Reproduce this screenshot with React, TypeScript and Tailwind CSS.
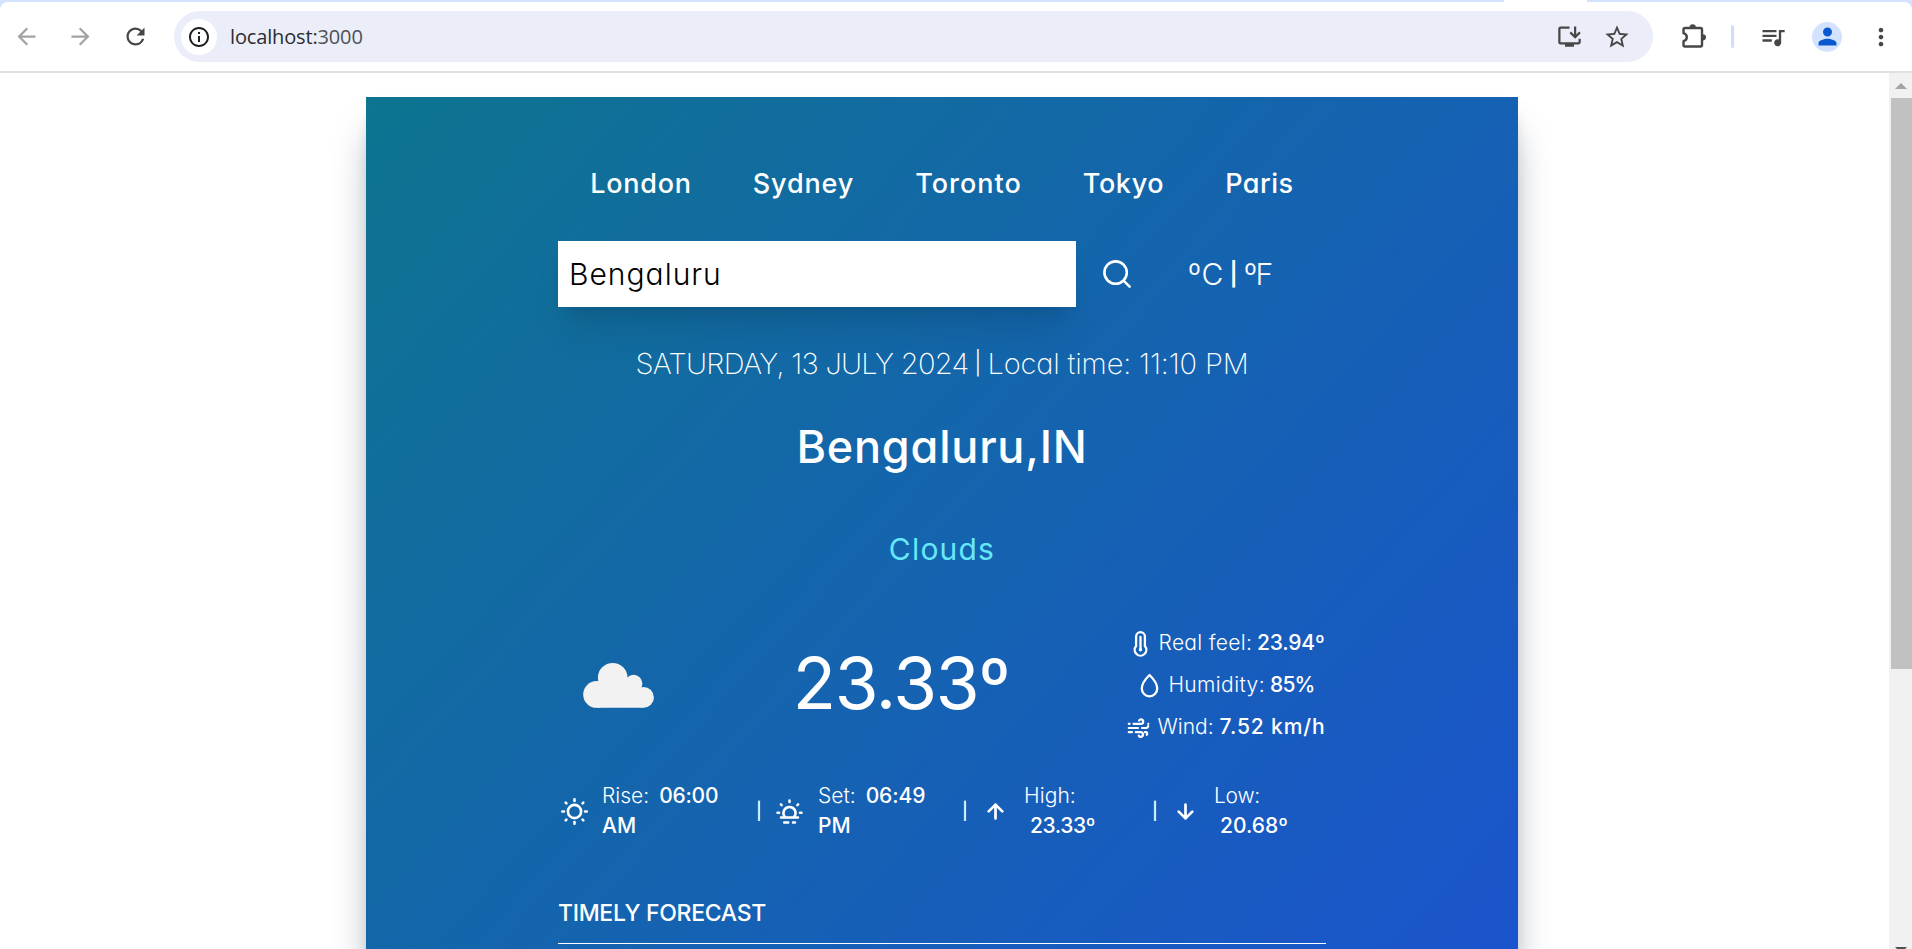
import type { ReactNode } from "react";
import {
  MdArrowBack,
  MdArrowForward,
  MdInfoOutline,
  MdInstallDesktop,
  MdMoreVert,
  MdPerson,
  MdQueueMusic,
  MdRefresh,
  MdStarBorder,
} from "react-icons/md";

const stroke = {
  fill: "none",
  stroke: "currentColor",
  strokeLinecap: "round",
  strokeLinejoin: "round",
} as const;

const ExtensionIcon = () => (
  <svg viewBox="0 0 26 26" className="size-[26px]" {...stroke} strokeWidth={2.4}>
    <path d="M4 4H19.5Q21 4 21 5.5V21Q21 22.5 19.5 22.5H4Q2.5 22.5 2.5 21V17.2Q5.8 16.2 5.8 13.2T2.5 9.2V5.5Q2.5 4 4 4Z" />
    <path d="M8.6 3.4a3.1 3.2 0 0 1 6.2 0ZM21.8 10.2a3.2 3.1 0 0 1 0 6.2Z" fill="currentColor" stroke="none" />
  </svg>
);

const SearchIcon = () => (
  <svg viewBox="0 0 28 28" className="size-7" {...stroke} strokeWidth={2.6}>
    <circle cx="12.6" cy="12.6" r="11.2" />
    <path d="M20.8 20.8 26.6 26.6" />
  </svg>
);

const ThermometerIcon = () => (
  <svg viewBox="0 0 27 27" className="size-[27px]" {...stroke} strokeWidth={2.3}>
    <path d="M9.1 6.6a4.4 4.4 0 0 1 8.8 0V16a5.8 5.8 0 1 1-8.8 0Z" />
    <path d="M13.5 7V19" />
    <circle cx="13.5" cy="19.8" r="1.7" fill="currentColor" stroke="none" />
  </svg>
);

const DropIcon = () => (
  <svg viewBox="0 0 27 27" className="size-[27px]" {...stroke} strokeWidth={2.3}>
    <path d="M13.5 3C10.2 6.2 5.8 10.8 5.8 16.6a7.7 7.7 0 0 0 15.4 0C21.2 10.8 16.8 6.2 13.5 3Z" />
  </svg>
);

const WindIcon = () => (
  <svg viewBox="0 0 27 27" className="size-[27px]" {...stroke} strokeWidth={2.2}>
    <path d="M3.8 9.8H4.6M8.5 9.8H16a2.2 2.2 0 1 0-1.9-3.3M23.2 9.8H23.3" />
    <path d="M3.8 14H13M17 14H21.4a2 2 0 0 0 1.8-1.8" />
    <path d="M3.8 18.2H7M10.8 18.2H15.6a2.3 2.3 0 1 1-1.9 3.4M20 18.2H21.4a1.8 1.8 0 0 1 .4 2.6" />
  </svg>
);

const SunIcon = () => (
  <svg viewBox="0 0 27 27" className="size-[27px]" {...stroke} strokeWidth={2.6}>
    <circle cx="13.5" cy="13.5" r="6.6" />
    <path d="M13.5 1.3V2.9M13.5 24.1V25.7M1.3 13.5H2.9M24.1 13.5H25.7M4.7 4.7 5.4 5.4M21.6 21.6 22.3 22.3M4.7 22.3 5.4 21.6M21.6 5.4 22.3 4.7" />
  </svg>
);

const SunsetIcon = () => (
  <svg viewBox="0 0 27 27" className="size-[27px]" {...stroke} strokeWidth={2.5}>
    <path d="M8.8 18.8C7.2 16.6 7 14.6 8 12.4a6.1 6.1 0 0 1 11 0C20 14.6 19.8 16.6 18.2 18.8" />
    <path d="M5 19.4H22M13.5 2.4V4M1.5 14.8H3M24 14.8H25.5M4.9 6.4 5.6 7.1M21.4 7.1 22.1 6.4M8.2 24.5H12.2M17 24.5H19" />
  </svg>
);

const ArrowIcon = ({ down = false }: { down?: boolean }) => (
  <svg viewBox="0 0 17 17" className={down ? "size-[17px] rotate-180" : "size-[17px]"} {...stroke} strokeWidth={2.7}>
    <path d="M8.5 15.4V1.6M1.7 8.4 8.5 1.6 15.3 8.4" />
  </svg>
);

const CloudIcon = () => (
  <svg viewBox="0 0 71 45" className="h-[45px] w-[71px]" fill="#f2f2f2">
    <circle cx="29.7" cy="14.8" r="14.8" />
    <circle cx="13.6" cy="31.4" r="13.4" />
    <circle cx="50.6" cy="20.6" r="8.8" />
    <circle cx="60.5" cy="34.4" r="10.4" />
    <path d="M13.6 20H52L60.5 34.4V44.8H13.6Z" />
  </svg>
);

const cities = [
  { name: "London", className: "tracking-[0.7px]" },
  { name: "Sydney", className: "tracking-[0.9px]" },
  { name: "Toronto", className: "tracking-[1px]" },
  { name: "Tokyo", className: "tracking-[0.6px]" },
  { name: "Paris", className: "tracking-[0.5px]" },
];

function Detail({ icon, label, value, labelClass, valueClass }: {
  icon: ReactNode;
  label: string;
  value: string;
  labelClass: string;
  valueClass: string;
}) {
  return (
    <div className="flex h-[30px] items-center justify-center whitespace-nowrap">
      {icon}
      <span className={`ml-[5px] font-light ${labelClass}`}>{label}</span>
      <span className={`font-medium ${valueClass}`}>{value}</span>
    </div>
  );
}

const Divider = () => <span className="flex w-0.5 justify-center text-[17px] font-medium">|</span>;

function Toolbar() {
  return (
    <header className="shrink-0 border-b-2 border-[#e0e1e3] bg-[#d3e3fd]">
      <div className="flex h-0.5">
        <span className="ml-[1504px] w-[83px] bg-white" />
      </div>
      <div className="flex h-[69px] items-center rounded-t-lg bg-white text-[#474747]">
        <MdArrowBack className="ml-[13px] size-[27px] text-[#a3a3a3]" />
        <MdArrowForward className="ml-[27px] size-[27px] text-[#a3a3a3]" />
        <MdRefresh className="ml-[28px] size-[27px]" />
        <div className="ml-[25px] flex h-[51px] w-[1479px] items-center rounded-full bg-[#ebeef8]">
          <span className="ml-[7px] flex size-9 items-center justify-center rounded-full bg-white text-[#1f1f1f]">
            <MdInfoOutline className="size-6" />
          </span>
          <span className="ml-[13px] font-['Open_Sans'] text-[20px] tracking-[-0.15px] text-[#2b2c30]">
            localhost:<span className="text-[#4d5057]">3000</span>
          </span>
          <MdInstallDesktop className="ml-auto size-[27px]" />
          <MdStarBorder className="mr-[22px] ml-[20px] size-7" />
        </div>
        <span className="ml-[28px]">
          <ExtensionIcon />
        </span>
        <span className="ml-[24px] h-[23px] w-[3px] rounded-full bg-[#cfdffb]" />
        <MdQueueMusic className="ml-[25px] size-7" />
        <span className="ml-[25px] flex size-[30px] items-center justify-center rounded-full bg-[#d3e3fd] text-[#0b57d0]">
          <MdPerson className="size-[27px]" />
        </span>
        <MdMoreVert className="ml-[25px] size-[28px]" />
      </div>
    </header>
  );
}

function WeatherCard() {
  return (
    <main className="mt-6 ml-[366px] h-[1243px] w-[1152px] bg-linear-to-br/srgb from-[#0e7490] to-[#1d4ed8] px-48 pt-[67px] text-white shadow-[0_30px_37.5px_-7.5px_#9ca3af,0_12px_15px_-9px_#9ca3af]">
      <nav className="flex h-10 items-center justify-center gap-[61px] text-[27px] font-medium">
        {cities.map((city) => (
          <button key={city.name} className={city.className}>
            {city.name}
          </button>
        ))}
      </nav>

      <div className="mt-[37px] flex h-[66px] items-center text-[30px] font-light">
        <div className="flex h-full w-[518px] items-center bg-white pl-[11px] tracking-[1px] text-black shadow-[0_30px_37.5px_-7.5px_rgba(0,0,0,0.1),0_12px_15px_-9px_rgba(0,0,0,0.1)]">
          Bengaluru
        </div>
        <span className="ml-[27px]">
          <SearchIcon />
        </span>
        <span className="ml-[57px] w-[36px] tracking-[0.6px]">ºC</span>
        <span className="ml-[8px] flex w-[3px] justify-center text-[23px] font-semibold">|</span>
        <span className="ml-[9px] tracking-[-1.5px]">ºF</span>
      </div>

      <p className="mt-[34px] flex h-[45px] items-center justify-center text-[29px] font-extralight whitespace-pre">
        <span className="tracking-[-0.73px]">SATURDAY, 13 JULY 2024</span>
        <span className="mx-[9px] flex w-px justify-center text-[23px] font-light">|</span>
        <span className="tracking-[-0.15px]">Local time: 11:10 PM</span>
      </p>
      <h1 className="mt-[34px] flex h-[54px] items-center justify-center text-[45px] font-medium tracking-[0.8px]">
        Bengaluru,IN
      </h1>
      <p className="mt-[55px] flex h-10 items-center justify-center text-[30px] tracking-[1.2px] text-[#67e8f9]">
        Clouds
      </p>

      <section className="mt-[59px] flex items-center justify-between text-[21px]">
        <div className="ml-[25px]">
          <CloudIcon />
        </div>
        <p className="mb-1 ml-[23px] text-[71px] leading-none tracking-[-1.2px]">23.33º</p>
        <div className="flex w-[201px] flex-col gap-3">
          <Detail icon={<ThermometerIcon />} label="Real feel:" value="23.94º" labelClass="tracking-[0.3px]" valueClass="ml-[5px] tracking-[-0.2px]" />
          <Detail icon={<DropIcon />} label="Humidity:" value="85%" labelClass="tracking-[0.4px]" valueClass="ml-[5px] tracking-[-0.8px]" />
          <Detail icon={<WindIcon />} label="Wind:" value="7.52 km/h" labelClass="" valueClass="ml-1.5 tracking-[0.9px]" />
        </div>
      </section>

      <section className="mt-[39px] flex h-[60px] items-center text-[21px] leading-[30px]">
        <div className="flex w-[200px] items-center pl-[3px]">
          <SunIcon />
          <p className="ml-[14px] font-light">
            Rise:<span className="ml-[10px] font-medium tracking-[-0.25px]">06:00</span>
            <br />
            <span className="font-medium">AM</span>
          </p>
        </div>
        <Divider />
        <div className="flex w-[204px] items-center pl-4">
          <SunsetIcon />
          <p className="ml-[15px] font-light">
            Set:<span className="ml-[10px] font-medium tracking-[-0.1px]">06:49</span>
            <br />
            <span className="font-medium">PM</span>
          </p>
        </div>
        <Divider />
        <div className="flex w-[188px] items-center pl-[21px]">
          <ArrowIcon />
          <p className="ml-[20px] font-light">
            <span className="tracking-[0.1px]">High:</span>
            <br />
            <span className="ml-[6px] font-medium tracking-[-0.4px]">23.33º</span>
          </p>
        </div>
        <Divider />
        <div className="flex items-center pl-[21px]">
          <ArrowIcon down />
          <p className="ml-[20px] font-light">
            <span className="tracking-[-0.25px]">Low:</span>
            <br />
            <span className="ml-[6px] font-medium">20.68º</span>
          </p>
        </div>
      </section>

      <section className="mt-[54px]">
        <h2 className="flex h-9 items-center text-[23px] font-medium tracking-[-0.3px]">TIMELY FORECAST</h2>
        <hr className="mt-3 border-t border-white" />
      </section>
    </main>
  );
}

function Scrollbar() {
  return (
    <div className="flex h-full w-[23px] shrink-0 flex-col items-end overflow-hidden bg-[#f1f1f1]">
      <div className="flex h-[25px] w-full shrink-0 items-center justify-center">
        <svg viewBox="0 0 12 6" className="h-1.5 w-3" fill="#a3a3a3">
          <path d="M0 6 6 0 12 6Z" />
        </svg>
      </div>
      <div className="h-[571px] w-[21px] shrink-0 bg-[#c1c1c1]" />
      <svg viewBox="0 0 12 6" className="mt-[278px] mr-[5px] h-1.5 w-3 shrink-0" fill="#505050">
        <path d="M0 0H12L6 6Z" />
      </svg>
    </div>
  );
}

export default function App() {
  return (
    <div className="flex h-[949px] flex-col overflow-hidden bg-white font-[Inter,sans-serif] [font-feature-settings:'cv11']">
      <Toolbar />
      <div className="flex min-h-0 flex-1">
        <div className="min-w-0 flex-1 overflow-hidden">
          <WeatherCard />
        </div>
        <Scrollbar />
      </div>
    </div>
  );
}
